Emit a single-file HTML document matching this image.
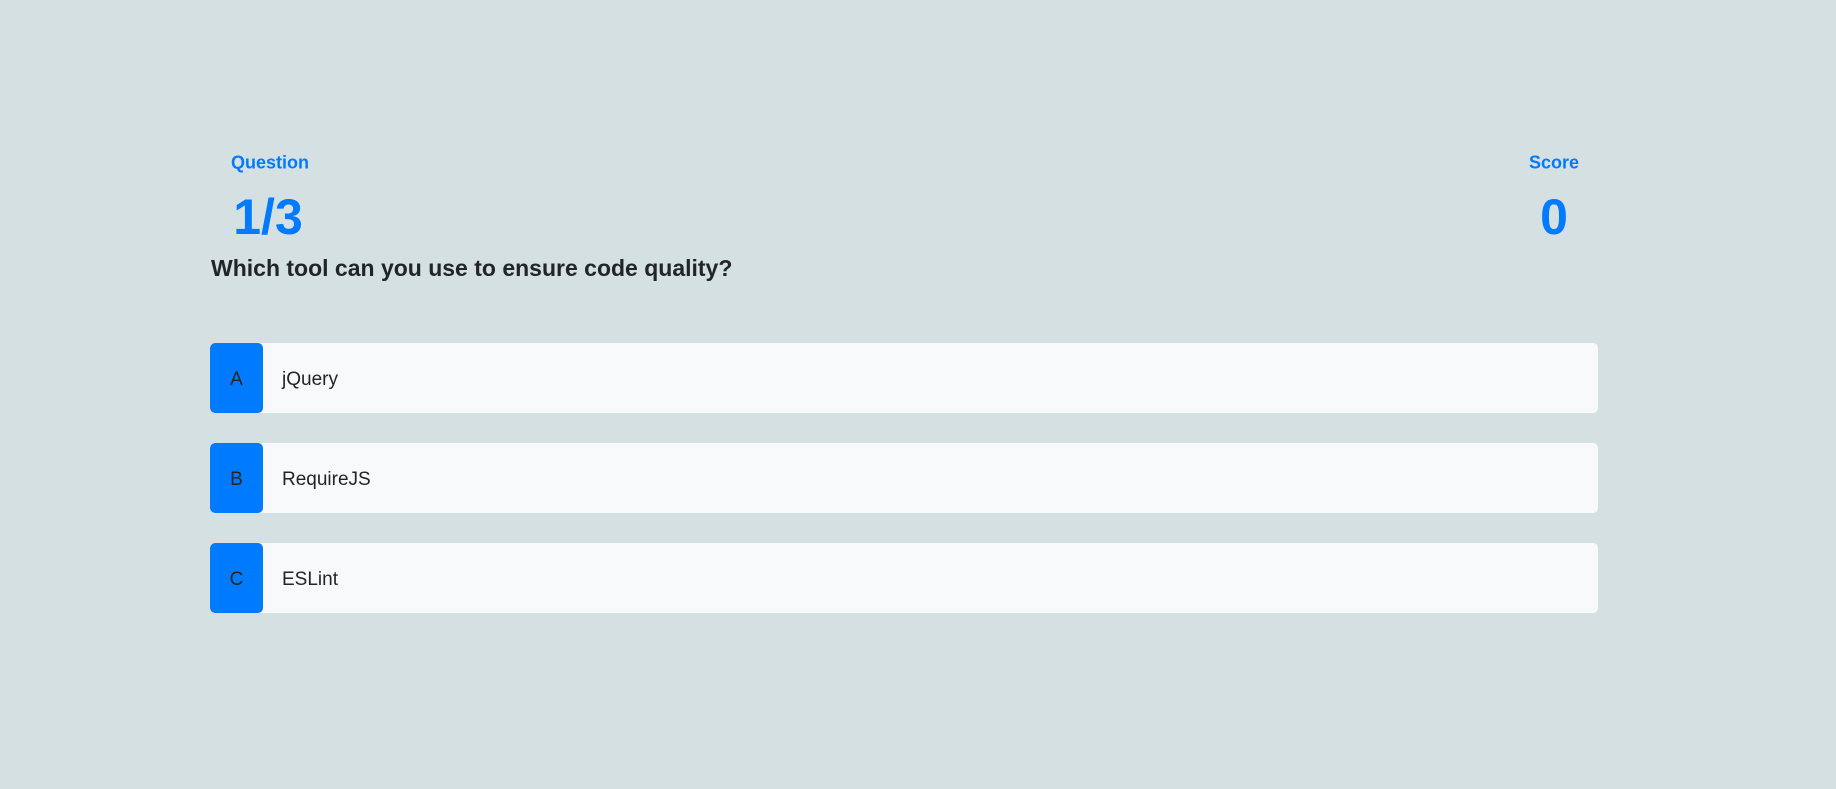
<!DOCTYPE html>
<html><head><style>
body{margin:0;width:1836px;height:789px;background:#d5e0e2;font-family:"Liberation Sans",sans-serif;position:relative;overflow:hidden}
.a{position:absolute}
.lbl{color:#007bff;font-size:18px;font-weight:bold;transform:translate(-50%,-50%)}
.big{color:#007bff;font-size:50px;font-weight:bold;transform:translate(-50%,-50%)}
.q{left:211px;top:255px;font-size:23px;font-weight:bold;color:#212529}
.opt{left:210px;width:1388px;height:70px;background:#f8f9fa;border-radius:5px;overflow:hidden}
.opt .k{position:absolute;left:0;top:0;width:53px;height:70px;background:#007bff;border-radius:5px;color:#212529;font-size:19px;line-height:74px;text-align:center}
.opt .t{position:absolute;left:72px;top:0;line-height:74px;font-size:19px;color:#212529}
</style></head><body>
<div class="a lbl" style="left:270px;top:163px">Question</div>
<div class="a big" style="left:268px;top:217px">1/3</div>
<div class="a lbl" style="left:1554px;top:163px">Score</div>
<div class="a big" style="left:1554px;top:217px">0</div>
<div class="a q">Which tool can you use to ensure code quality?</div>
<div class="a opt" style="top:343px"><div class="k">A</div><div class="t">jQuery</div></div>
<div class="a opt" style="top:443px"><div class="k">B</div><div class="t">RequireJS</div></div>
<div class="a opt" style="top:543px"><div class="k">C</div><div class="t">ESLint</div></div>
</body></html>
